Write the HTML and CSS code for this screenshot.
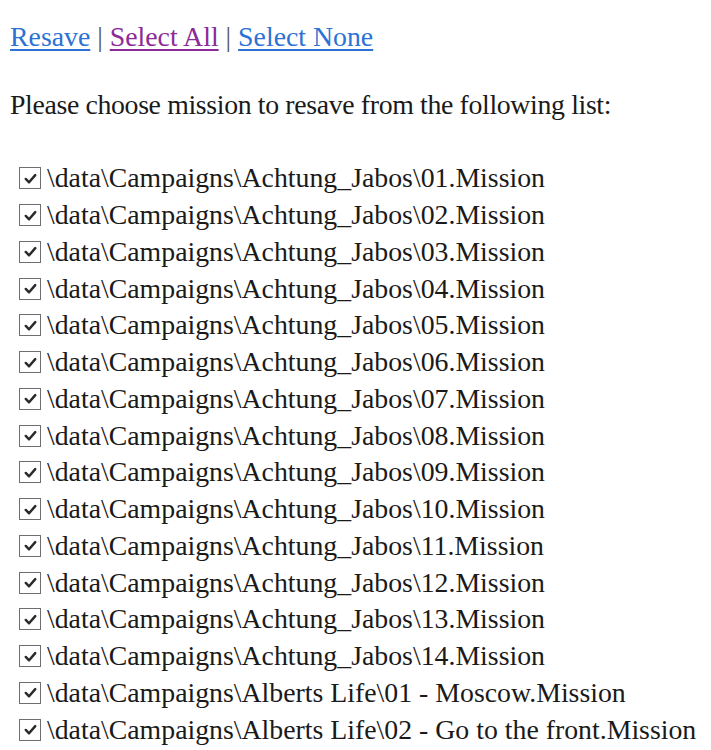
FILE: index.html
```html
<!DOCTYPE html>
<html>
<head>
<meta charset="utf-8">
<link rel="stylesheet" href="styles.css">
</head>
<body>
<div class="links">
  <a class="link" href="#">Resave</a> <span class="sep">|</span> <a class="link visited" href="#">Select All</a> <span class="sep">|</span> <a class="link" href="#">Select None</a>
</div>
<p class="intro">Please choose mission to resave from the following list:</p>
<ul class="list">
  <li class="row"><span class="cb"><svg viewBox="0 0 20 20"><path d="M5 10.5 L8.5 14 L15 6.5"/></svg></span><span>\data\Campaigns\Achtung_Jabos\01.Mission</span></li>
  <li class="row"><span class="cb"><svg viewBox="0 0 20 20"><path d="M5 10.5 L8.5 14 L15 6.5"/></svg></span><span>\data\Campaigns\Achtung_Jabos\02.Mission</span></li>
  <li class="row"><span class="cb"><svg viewBox="0 0 20 20"><path d="M5 10.5 L8.5 14 L15 6.5"/></svg></span><span>\data\Campaigns\Achtung_Jabos\03.Mission</span></li>
  <li class="row"><span class="cb"><svg viewBox="0 0 20 20"><path d="M5 10.5 L8.5 14 L15 6.5"/></svg></span><span>\data\Campaigns\Achtung_Jabos\04.Mission</span></li>
  <li class="row"><span class="cb"><svg viewBox="0 0 20 20"><path d="M5 10.5 L8.5 14 L15 6.5"/></svg></span><span>\data\Campaigns\Achtung_Jabos\05.Mission</span></li>
  <li class="row"><span class="cb"><svg viewBox="0 0 20 20"><path d="M5 10.5 L8.5 14 L15 6.5"/></svg></span><span>\data\Campaigns\Achtung_Jabos\06.Mission</span></li>
  <li class="row"><span class="cb"><svg viewBox="0 0 20 20"><path d="M5 10.5 L8.5 14 L15 6.5"/></svg></span><span>\data\Campaigns\Achtung_Jabos\07.Mission</span></li>
  <li class="row"><span class="cb"><svg viewBox="0 0 20 20"><path d="M5 10.5 L8.5 14 L15 6.5"/></svg></span><span>\data\Campaigns\Achtung_Jabos\08.Mission</span></li>
  <li class="row"><span class="cb"><svg viewBox="0 0 20 20"><path d="M5 10.5 L8.5 14 L15 6.5"/></svg></span><span>\data\Campaigns\Achtung_Jabos\09.Mission</span></li>
  <li class="row"><span class="cb"><svg viewBox="0 0 20 20"><path d="M5 10.5 L8.5 14 L15 6.5"/></svg></span><span>\data\Campaigns\Achtung_Jabos\10.Mission</span></li>
  <li class="row"><span class="cb"><svg viewBox="0 0 20 20"><path d="M5 10.5 L8.5 14 L15 6.5"/></svg></span><span>\data\Campaigns\Achtung_Jabos\11.Mission</span></li>
  <li class="row"><span class="cb"><svg viewBox="0 0 20 20"><path d="M5 10.5 L8.5 14 L15 6.5"/></svg></span><span>\data\Campaigns\Achtung_Jabos\12.Mission</span></li>
  <li class="row"><span class="cb"><svg viewBox="0 0 20 20"><path d="M5 10.5 L8.5 14 L15 6.5"/></svg></span><span>\data\Campaigns\Achtung_Jabos\13.Mission</span></li>
  <li class="row"><span class="cb"><svg viewBox="0 0 20 20"><path d="M5 10.5 L8.5 14 L15 6.5"/></svg></span><span>\data\Campaigns\Achtung_Jabos\14.Mission</span></li>
  <li class="row"><span class="cb"><svg viewBox="0 0 20 20"><path d="M5 10.5 L8.5 14 L15 6.5"/></svg></span><span>\data\Campaigns\Alberts Life\01 - Moscow.Mission</span></li>
  <li class="row"><span class="cb"><svg viewBox="0 0 20 20"><path d="M5 10.5 L8.5 14 L15 6.5"/></svg></span><span>\data\Campaigns\Alberts Life\02 - Go to the front.Mission</span></li>
</ul>
</body>
</html>
```
FILE: styles.css
```css
html, body {
  background: #ffffff;
}
body {
  margin: 0;
  padding: 0 10px;
  font-family: "Liberation Serif", "Times New Roman", serif;
  font-size: 27.8px;
  color: #1a1a1a;
}
.links {
  margin-top: 22px;
  line-height: 30px;
}
.link {
  color: #2b72d4;
  text-decoration: underline;
  text-decoration-thickness: 2px;
  text-underline-offset: 3px;
}
.link.visited {
  color: #8c2a98;
}
.sep {
  color: #555555;
}
.intro {
  margin: 38px 0 0;
  line-height: 30px;
  letter-spacing: -0.35px;
}
.list {
  list-style: none;
  margin: 40px 0 0;
  padding: 0;
}
.row {
  display: flex;
  align-items: center;
  height: 36.75px;
  white-space: nowrap;
}
.cb {
  box-sizing: border-box;
  width: 22px;
  height: 22px;
  border: 1.5px solid #6e6e6e;
  margin: 0 6px 0 9px;
  display: flex;
  align-items: center;
  justify-content: center;
  background: #fff;
}
.cb svg {
  width: 19px;
  height: 19px;
  fill: none;
  stroke: #2a2a2a;
  stroke-width: 2.6;
  stroke-linecap: round;
  stroke-linejoin: round;
}
```
